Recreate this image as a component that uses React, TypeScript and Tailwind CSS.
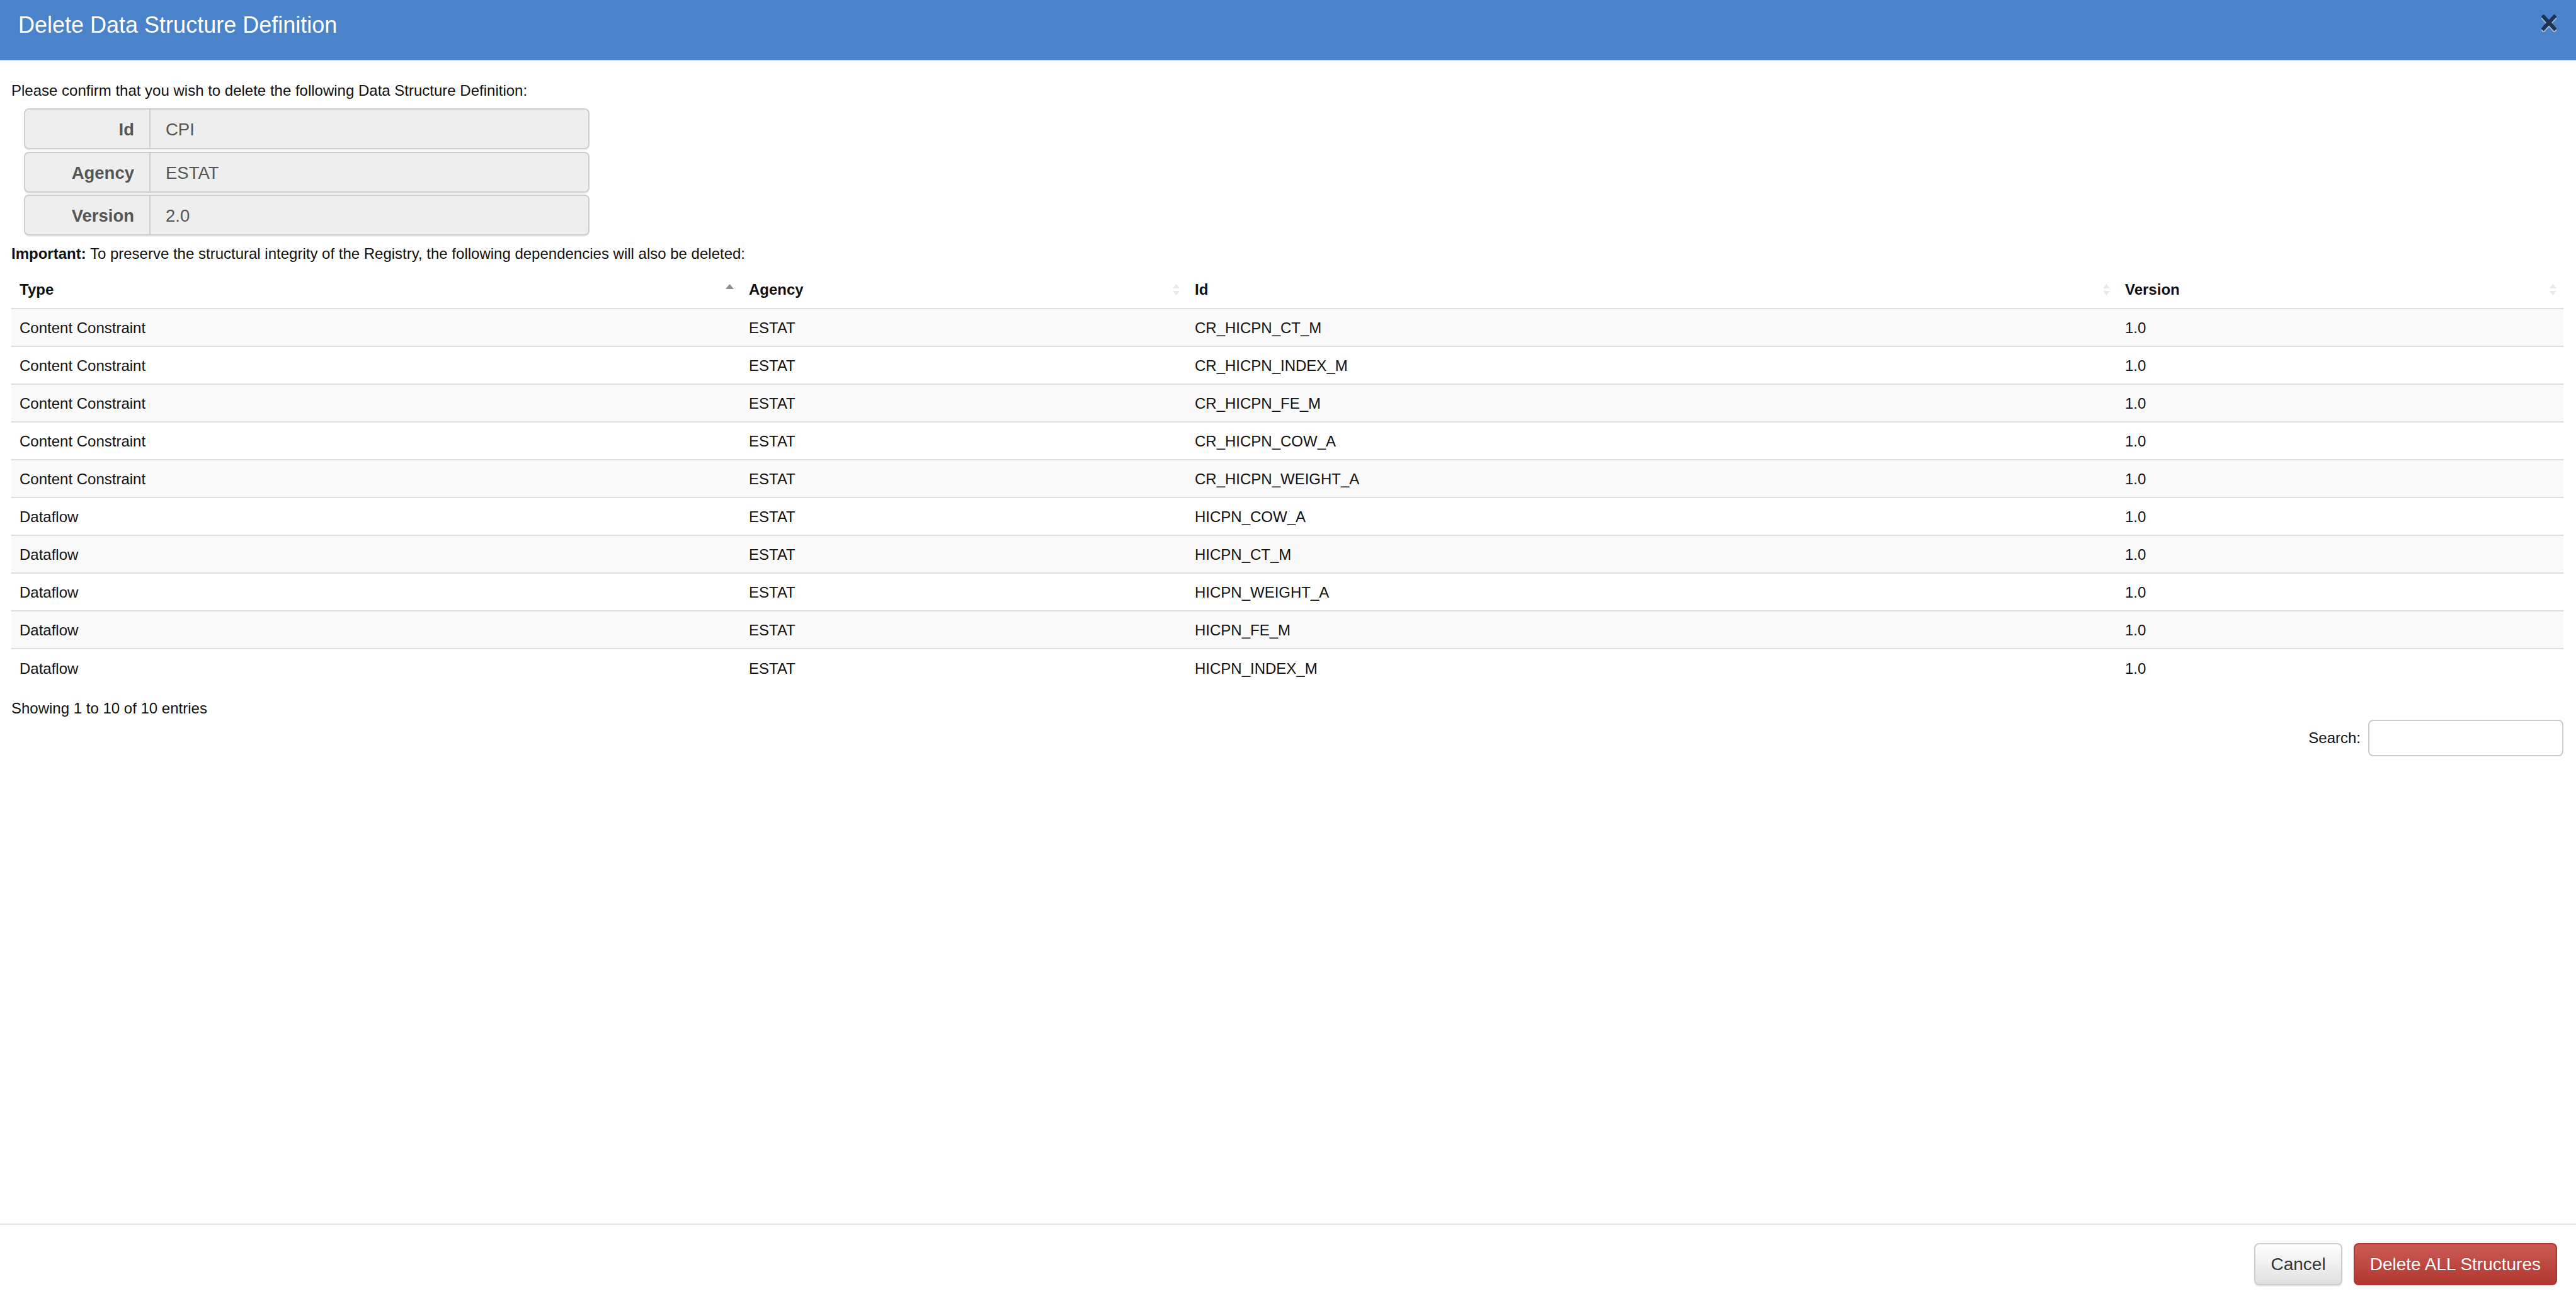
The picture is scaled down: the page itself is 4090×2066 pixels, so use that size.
import React from "react";

const rows: [string, string, string, string][] = [
  ["Content Constraint", "ESTAT", "CR_HICPN_CT_M", "1.0"],
  ["Content Constraint", "ESTAT", "CR_HICPN_INDEX_M", "1.0"],
  ["Content Constraint", "ESTAT", "CR_HICPN_FE_M", "1.0"],
  ["Content Constraint", "ESTAT", "CR_HICPN_COW_A", "1.0"],
  ["Content Constraint", "ESTAT", "CR_HICPN_WEIGHT_A", "1.0"],
  ["Dataflow", "ESTAT", "HICPN_COW_A", "1.0"],
  ["Dataflow", "ESTAT", "HICPN_CT_M", "1.0"],
  ["Dataflow", "ESTAT", "HICPN_WEIGHT_A", "1.0"],
  ["Dataflow", "ESTAT", "HICPN_FE_M", "1.0"],
  ["Dataflow", "ESTAT", "HICPN_INDEX_M", "1.0"],
];

function SortIcon({ active }: { active?: boolean }) {
  if (active) {
    return (
      <svg width="13" height="18" viewBox="0 0 13 18" className="shrink-0">
        <polygon points="0,8 6.5,0 13,8" fill="#8f8f8f" />
      </svg>
    );
  }
  return (
    <svg width="11" height="18" viewBox="0 0 11 18" className="shrink-0">
      <polygon points="0,7 5.5,0 11,7" fill="#e9e9e9" />
      <polygon points="0,11 11,11 5.5,18" fill="#e9e9e9" />
    </svg>
  );
}

function KvRow({ label, value }: { label: string; value: string }) {
  return (
    <div className="flex h-[65px] items-stretch rounded-[8px] border-2 border-[#cdcdcd] bg-[#eeeeee] shadow-[0_2px_0_rgba(0,0,0,0.06)]">
      <div className="flex w-[199px] items-center justify-end border-r-2 border-[#cdcdcd] pr-[24px] pt-[3px] text-[27.5px] font-bold text-[#555555]">
        {label}
      </div>
      <div className="flex flex-1 items-center pl-[24px] pt-[3px] text-[27.5px] text-[#555555]">{value}</div>
    </div>
  );
}

export default function App() {
  return (
    <div className="flex h-screen w-full flex-col bg-white font-['Liberation_Sans',Arial,Helvetica,sans-serif] text-[#111111]">
      {/* Header */}
      <div className="flex h-[97px] shrink-0 items-start justify-between border-b-2 border-[#d9dee5] bg-[#4a83c9] pl-[29px] pr-[31px] pt-[19px]">
        <h1 className="text-[36px] leading-[42px] text-white">Delete Data Structure Definition</h1>
        <button className="mt-[4px] flex h-[28px] w-[24px] items-start justify-center">
          <svg width="24" height="28" viewBox="0 0 24 28">
            <g stroke="#a9c3e6" strokeWidth="6" strokeLinecap="butt">
              <line x1="1.5" y1="4" x2="22.5" y2="27" />
              <line x1="22.5" y1="4" x2="1.5" y2="27" />
            </g>
            <g stroke="#1e3352" strokeWidth="6" strokeLinecap="butt">
              <line x1="1.5" y1="1.5" x2="22.5" y2="24.5" />
              <line x1="22.5" y1="1.5" x2="1.5" y2="24.5" />
            </g>
          </svg>
        </button>
      </div>

      {/* Body */}
      <div className="flex-1 pl-[18px] pr-[20px] pt-[30px] text-[24px] leading-[34px]">
        <p>Please confirm that you wish to delete the following Data Structure Definition:</p>

        <div className="ml-[20px] mt-[11px] flex w-[898px] flex-col gap-[3.5px]">
          <KvRow label="Id" value="CPI" />
          <KvRow label="Agency" value="ESTAT" />
          <KvRow label="Version" value="2.0" />
        </div>

        <p className="mt-[12px]">
          <span className="font-bold">Important:</span> To preserve the structural integrity of the Registry, the
          following dependencies will also be deleted:
        </p>

        <table className="mt-[11px] w-full table-fixed border-collapse">
          <colgroup>
            <col className="w-[1158px]" />
            <col className="w-[708px]" />
            <col className="w-[1477px]" />
            <col />
          </colgroup>
          <thead>
            <tr>
              {["Type", "Agency", "Id", "Version"].map((h, i) => (
                <th key={h} className="border-b-2 border-[#dddddd] pb-[12px] pl-[13px] pr-[11px] pt-[12px] text-left font-bold">
                  <div className="flex items-center justify-between">
                    <span>{h}</span>
                    <SortIcon active={i === 0} />
                  </div>
                </th>
              ))}
            </tr>
          </thead>
          <tbody>
            {rows.map((r, idx) => (
              <tr key={idx} className={idx % 2 === 0 ? "bg-[#f9f9f9]" : "bg-white"}>
                {r.map((c, j) => (
                  <td key={j} className="h-[60px] border-t-2 border-[#dddddd] pl-[13px] pr-[11px] pt-[2px] align-middle">
                    {c}
                  </td>
                ))}
              </tr>
            ))}
          </tbody>
        </table>

        <div className="mt-[18px]">Showing 1 to 10 of 10 entries</div>

        <div className="mt-[1px] flex items-center justify-end">
          <label className="mr-[12px]">Search:</label>
          <input
            type="text"
            className="h-[58px] w-[310px] rounded-[8px] border-2 border-[#cccccc] bg-white px-[10px] outline-none"
          />
        </div>
      </div>

      {/* Footer */}
      <div className="flex shrink-0 items-center justify-end gap-[18px] border-t-2 border-[#e5e5e5] pb-[25px] pl-[30px] pr-[30px] pt-[29px] text-[28px]">
        <button className="h-[67px] rounded-[8px] border-2 border-[#cccccc] bg-gradient-to-b from-white to-[#e0e0e0] px-[24px] text-[#333333] shadow-[0_2px_2px_rgba(0,0,0,0.1)] [text-shadow:0_1px_0_#fff]">
          Cancel
        </button>
        <button className="h-[67px] rounded-[8px] border-2 border-[#ad3630] bg-gradient-to-b from-[#cb5a55] to-[#b1372f] px-[24px] text-white [text-shadow:0_-1px_0_rgba(0,0,0,0.2)]">
          Delete ALL Structures
        </button>
      </div>
    </div>
  );
}
